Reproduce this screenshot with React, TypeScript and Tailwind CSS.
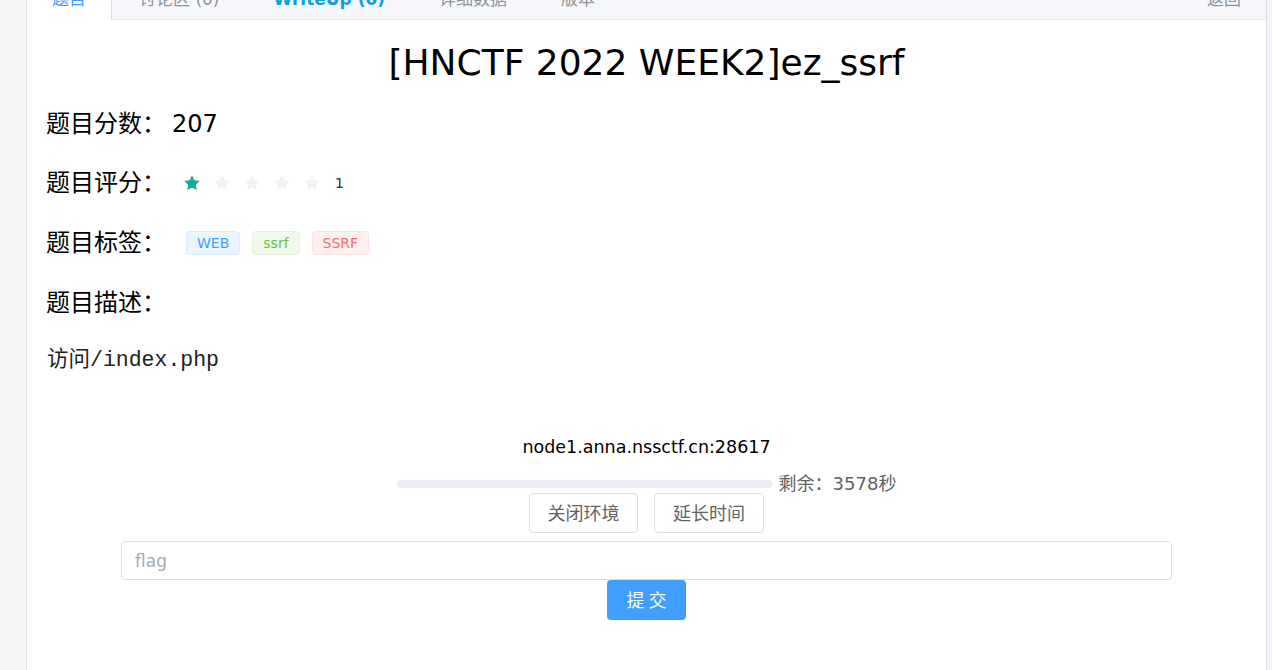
import React from "react";

const FONT = { fontFamily: '"DejaVu Sans", "Noto Sans CJK SC", sans-serif' };

const tabs = [
  { label: "讨论区 (0)", cls: "text-[#909399]" },
  { label: "WriteUp (0)", cls: "text-[#0ea0d8] font-bold" },
  { label: "详细数据", cls: "text-[#909399]" },
  { label: "版本", cls: "text-[#909399]" },
];

const tags = [
  { label: "WEB", cls: "bg-[#ecf5ff] border-[#d9ecff] text-[#409eff]" },
  { label: "ssrf", cls: "bg-[#f0f9eb] border-[#e1f3d8] text-[#67c23a]" },
  { label: "SSRF", cls: "bg-[#fef0f0] border-[#fde2e2] text-[#f56c6c]" },
];

function Star({ on }: { on: boolean }) {
  return (
    <svg width="18" height="18" viewBox="0 0 24 24" className="block">
      <path
        d="M12 1.8l3.1 6.6 7.2.9-5.3 5 1.4 7.1L12 17.9l-6.4 3.5 1.4-7.1-5.3-5 7.2-.9z"
        fill={on ? "#0fac96" : "#eff2f7"}
      />
    </svg>
  );
}

export default function App() {
  return (
    <div
      className="min-h-screen bg-[#f4f5f7] pl-[26px] pr-[5px] overflow-hidden"
      style={FONT}
    >
      <div className="-mt-[21px] bg-white border border-[#dcdfe6] min-h-[720px]">
        <div className="flex h-[40px] bg-[#f5f7fa] border-b border-[#e4e7ed]">
          <div className="h-[40px] bg-white border-r border-[#dcdfe6] px-[25px] flex items-center text-[17px] text-[#409eff]">
            题目
          </div>
          {tabs.map((t) => (
            <div
              key={t.label}
              className={`px-[27px] flex items-center text-[17px] ${t.cls}`}
            >
              {t.label}
            </div>
          ))}
          <div className="ml-auto pr-[25px] flex items-center text-[17px] text-[#909399]">
            返回
          </div>
        </div>

        <div className="px-[19px]">
          <h1 className="mt-[20px] text-center text-[36px] leading-[46px] text-black">
            [HNCTF 2022 WEEK2]ez_ssrf
          </h1>

          <div className="mt-[21px] text-[24px] leading-[34px] text-black">
            题目分数：<span className="ml-[6px]">207</span>
          </div>

          <div className="mt-[25px] flex items-center text-[24px] leading-[34px] text-black">
            <span>题目评分：</span>
            <div className="ml-[17px] flex items-center gap-[12px]">
              {[0, 1, 2, 3, 4].map((i) => (
                <Star key={i} on={i === 0} />
              ))}
            </div>
            <span className="ml-[14px] text-[14px] text-[#1f2d3d]">1</span>
          </div>

          <div className="mt-[26px] flex items-center text-[24px] leading-[34px] text-black">
            <span>题目标签：</span>
            <div className="ml-[20px] flex items-center gap-[12px]">
              {tags.map((t) => (
                <span
                  key={t.label}
                  className={`h-[24px] px-[10px] flex items-center border rounded-[4px] text-[14px] ${t.cls}`}
                >
                  {t.label}
                </span>
              ))}
            </div>
          </div>

          <div className="mt-[26px] text-[24px] leading-[34px] text-black">
            题目描述：
          </div>

          <p
            className="mt-[25px] pl-[1px] text-[21.5px] leading-[30px] text-[#222]"
            style={{ fontFamily: '"Liberation Mono", "Noto Sans CJK SC", monospace' }}
          >
            访问/index.php
          </p>

          <div className="mt-[60px] flex flex-col items-center">
            <div className="text-[17.5px] leading-[24px] text-black">
              node1.anna.nssctf.cn:28617
            </div>
            <div className="mt-[16px] h-[18px] flex items-center">
              <div className="w-[375px] h-[8px] rounded-full bg-[#ebeef5]" />
              <span className="ml-[7px] text-[18px] leading-[18px] text-[#606266]">
                剩余：3578秒
              </span>
            </div>
            <div className="flex gap-[16px]">
              <button className="h-[40px] w-[109px] border border-[#dcdfe6] rounded-[4px] bg-white text-[18px] text-[#606266]">
                关闭环境
              </button>
              <button className="h-[40px] w-[110px] border border-[#dcdfe6] rounded-[4px] bg-white text-[18px] text-[#606266]">
                延长时间
              </button>
            </div>
            <input
              placeholder="flag"
              className="mt-[8px] w-[1051px] h-[39px] border border-[#dcdfe6] rounded-[4px] px-[13px] text-[17px] text-[#606266] placeholder:text-[#a8abb2] outline-none"
            />
            <button className="h-[40px] w-[79px] rounded-[4px] bg-[#409eff] text-white text-[18px] tracking-[4px] pl-[4px]">
              提交
            </button>
          </div>
        </div>
      </div>
    </div>
  );
}
